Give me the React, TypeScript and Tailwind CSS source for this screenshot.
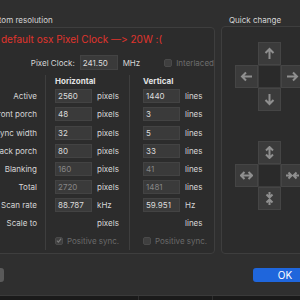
import React from "react";

const S = "#8f8f8f";

const Ico = ({ d }: { d: string }) => (
  <svg width="13" height="13" viewBox="0 0 13 13" fill="none" stroke={S} strokeWidth="2" strokeLinecap="butt" strokeLinejoin="miter">
    <path d={d} />
  </svg>
);

const Cell = ({ d, center }: { d?: string; center?: boolean }) => {
  if (center) return <div className="w-[23px] h-[23px] bg-[#2a2a2a] border border-[#3c3c3c]" />;
  if (!d) return <div className="w-[23px] h-[23px]" />;
  return (
    <div className="w-[23px] h-[23px] bg-[#3b3b3b] border border-[#454545] flex items-center justify-center">
      <Ico d={d} />
    </div>
  );
};

const Pad = ({ up, left, right, down }: { up: string; left: string; right: string; down: string }) => (
  <div className="grid grid-cols-[23px_23px_23px]">
    <Cell />
    <Cell d={up} />
    <Cell />
    <Cell d={left} />
    <Cell center />
    <Cell d={right} />
    <Cell />
    <Cell d={down} />
    <Cell />
  </div>
);

const Input = ({ v, dim, w = "w-[37px]", h = "h-[14px]" }: { v: string; dim?: boolean; w?: string; h?: string }) => (
  <div className={`${w} ${h} bg-[#3a3a3a] border border-[#434343] flex items-center pl-[2px] text-[8px] ${dim ? "text-[#868686]" : "text-[#dcdcdc]"}`}>
    {v}
  </div>
);

const Row = ({ children }: { children: React.ReactNode }) => (
  <div className="h-[18.6px] flex items-center">{children}</div>
);

const Check = ({ checked }: { checked?: boolean }) => (
  <div className="w-[8px] h-[8px] rounded-[2px] bg-[#3f3f3f] border border-[#4a4a4a] flex items-center justify-center">
    {checked && (
      <svg width="7" height="7" viewBox="0 0 7 7" fill="none" stroke="#7a7a7a" strokeWidth="1.3">
        <path d="M1 3.6L2.8 5.4L6 1.4" />
      </svg>
    )}
  </div>
);

export default function App() {
  const labels = ["Active", "Front porch", "Sync width", "Back porch", "Blanking", "Total", "Scan rate", "Scale to", ""];
  const h: [string, boolean][] = [["2560", false], ["48", false], ["32", false], ["80", false], ["160", true], ["2720", true], ["88.787", false]];
  const v: [string, boolean][] = [["1440", false], ["3", false], ["5", false], ["33", false], ["41", true], ["1481", true], ["59.951", false]];
  return (
    <div
      className="w-[300px] h-[300px] overflow-hidden bg-[#2f2f2f] flex flex-col"
      style={{ fontFamily: "Inter, 'Noto Sans', sans-serif", fontFeatureSettings: '"calt" 0, "liga" 0' }}
    >
      <div className="h-[295px] flex flex-col">
        <div className="flex ml-[-23px] pt-[14px]">
          {/* Custom resolution */}
          <div className="w-[238px] flex flex-col shrink-0">
            <div className="h-[12px] leading-[12px] pl-[7px] text-[8px] text-[#d6d6d6]">Custom resolution</div>
            <div className="mt-[1px] h-[227px] border border-[#3e3e3e] rounded-[4px] bg-[#2c2c2c] flex flex-col">
              <div className="pt-[4px] h-[18px] leading-[14px] pl-[23px] text-[10px] text-[#e0342c] whitespace-nowrap">
                default osx Pixel Clock —&gt; 20W :(
              </div>
              <div className="mt-[9px] h-[15px] flex items-center">
                <div className="w-[102px] pr-[5px] text-right text-[8px] text-[#d6d6d6]">Pixel Clock:</div>
                <Input v="241.50" w="w-[38px]" h="h-[15px]" />
                <div className="ml-[5px] text-[8px] text-[#d6d6d6]">MHz</div>
                <div className="ml-[24px]">
                  <Check />
                </div>
                <div className="ml-[4px] text-[8px] text-[#6c6c6c]">Interlaced</div>
              </div>
              <div className="mt-[5px] h-[175px] flex text-[8px] text-[#d6d6d6]">
                <div className="w-[67px] shrink-0 flex flex-col pr-[8px]">
                  <div className="h-[12.7px]" />
                  {labels.map((l, i) => (
                    <Row key={i}>
                      <div className="w-full text-right whitespace-nowrap">{l}</div>
                    </Row>
                  ))}
                </div>
                <div className="w-[84px] shrink-0 border-l border-[#3e3e3e] pl-[9px] flex flex-col">
                  <div className="h-[12.7px] flex items-center font-bold text-[#e2e2e2]">Horizontal</div>
                  {h.map(([val, dim], i) => (
                    <Row key={i}>
                      <Input v={val} dim={dim} />
                      <div className="ml-[5px]">{i === 6 ? "kHz" : "pixels"}</div>
                    </Row>
                  ))}
                  <Row>
                    <div className="w-[37px]" />
                    <div className="ml-[5px]">pixels</div>
                  </Row>
                  <Row>
                    <Check checked />
                    <div className="ml-[4px] text-[#6a6a6a]">Positive sync.</div>
                  </Row>
                </div>
                <div className="flex-1 border-l border-[#3e3e3e] pl-[13px] flex flex-col">
                  <div className="h-[12.7px] flex items-center font-bold text-[#e2e2e2]">Vertical</div>
                  {v.map(([val, dim], i) => (
                    <Row key={i}>
                      <Input v={val} dim={dim} />
                      <div className="ml-[5px]">{i === 6 ? "Hz" : "lines"}</div>
                    </Row>
                  ))}
                  <Row>
                    <div className="w-[37px]" />
                    <div className="ml-[5px]">lines</div>
                  </Row>
                  <Row>
                    <Check />
                    <div className="ml-[4px] text-[#6a6a6a]">Positive sync.</div>
                  </Row>
                </div>
              </div>
            </div>
          </div>
          {/* Quick change */}
          <div className="ml-[6px] w-[97px] shrink-0 flex flex-col">
            <div className="h-[12px] leading-[12px] pl-[8px] text-[8px] text-[#d6d6d6] whitespace-nowrap">Quick change</div>
            <div className="h-[228px] border border-[#3e3e3e] rounded-[4px] bg-[#2c2c2c] flex flex-col pl-[13px] pt-[15px]">
              <Pad
                up="M6.5 12V2M2.5 6L6.5 2L10.5 6"
                down="M6.5 1V11M2.5 7L6.5 11L10.5 7"
                left="M12 6.5H2M6 2.5L2 6.5L6 10.5"
                right="M1 6.5H11M7 2.5L11 6.5L7 10.5"
              />
              <div className="h-[30px]" />
              <Pad
                up="M6.5 1V12M3 4.5L6.5 1L10 4.5M3 8.5L6.5 12L10 8.5"
                left="M1 6.5H12M4.5 3L1 6.5L4.5 10M8.5 3L12 6.5L8.5 10"
                right="M0 6.5H5.5M2.5 3.5L5.5 6.5L2.5 9.5M13 6.5H7.5M10.5 3.5L7.5 6.5L10.5 9.5"
                down="M6.5 0V5.5M3.5 2.5L6.5 5.5L9.5 2.5M6.5 13V7.5M3.5 10.5L6.5 7.5L9.5 10.5"
              />
            </div>
          </div>
        </div>
        <div className="mt-[14px] flex items-center h-[14px]">
          <div className="ml-[-56px] w-[60px] h-[14px] rounded-[3px] bg-[#5a5a5a]" />
          <div className="ml-auto mr-[-17px] w-[64px] h-[14px] rounded-[3px] bg-[#1f66dc] flex items-center justify-center text-[10px] text-white">
            OK
          </div>
        </div>
      </div>
      <div className="h-[5px] bg-[#1a1a1a] border-t border-[#3a3a3a] flex">
        <div className="ml-[138px] w-px h-full bg-[#2e2e2e]" />
        <div className="ml-[73px] w-px h-full bg-[#2e2e2e]" />
      </div>
    </div>
  );
}
